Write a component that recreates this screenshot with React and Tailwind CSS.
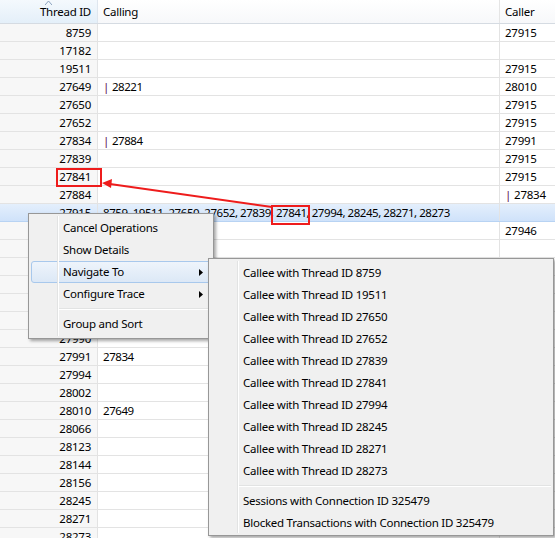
import React from 'react'

const rows = [
    { id: '8759', calling: '', caller: '27915' },
    { id: '17182', calling: '', caller: '' },
    { id: '19511', calling: '', caller: '27915' },
    { id: '27649', calling: '28221', bar: true, caller: '28010' },
    { id: '27650', calling: '', caller: '27915' },
    { id: '27652', calling: '', caller: '27915' },
    { id: '27834', calling: '27884', bar: true, caller: '27991' },
    { id: '27839', calling: '', caller: '27915' },
    { id: '27841', calling: '', caller: '27915' },
    { id: '27884', calling: '', caller: '27834', callerBar: true },
    { id: '27915', calling: '8759, 19511, 27650, 27652, 27839, 27841, 27994, 28245, 28271, 28273', caller: '', selected: true },
    { id: '27946', calling: '', caller: '27946' },
    { id: '27950', calling: '', caller: '' },
    { id: '27962', calling: '', caller: '' },
    { id: '27971', calling: '', caller: '' },
    { id: '27978', calling: '', caller: '' },
    { id: '27985', calling: '', caller: '' },
    { id: '27990', calling: '', caller: '' },
    { id: '27991', calling: '27834', caller: '' },
    { id: '27994', calling: '', caller: '' },
    { id: '28002', calling: '', caller: '' },
    { id: '28010', calling: '27649', caller: '' },
    { id: '28066', calling: '', caller: '' },
    { id: '28123', calling: '', caller: '' },
    { id: '28144', calling: '', caller: '' },
    { id: '28156', calling: '', caller: '' },
    { id: '28245', calling: '', caller: '' },
    { id: '28271', calling: '', caller: '' },
    { id: '28273', calling: '', caller: '' },
]

const callees = ['8759', '19511', '27650', '27652', '27839', '27841', '27994', '28245', '28271', '28273']

function Bar() {
    return <span className="text-[#5a1450] mr-[3px]">|</span>
}

function Tri() {
    return (
        <svg width="4" height="7" viewBox="0 0 4 7" className="mr-[7px]">
            <path d="M0 0 L4 3.5 L0 7 Z" fill="#000" />
        </svg>
    )
}

function MenuItem({ label, active, sub }) {
    return (
        <div className={`h-[22px] flex items-center mx-[2px] rounded-[3px] border ${active ? 'bg-gradient-to-b from-[#eef4fb] to-[#dce8f6] border-[#a8c8ec]' : 'border-transparent'}`}>
            <span className="pl-[31px] flex-1">{label}</span>
            {sub && <Tri />}
        </div>
    )
}

export default function App() {
    return (
        <div className="relative w-[555px] h-[538px] overflow-hidden bg-white text-[11.5px] tracking-[-0.25px] text-black leading-none" style={{ fontFamily: '"Noto Sans", "Open Sans", sans-serif' }}>
            {/* header */}
            <div className="flex h-[24px] border-b border-[#d5dbe2]">
                <div className="relative w-[98px] shrink-0 bg-gradient-to-b from-[#f4f9fd] to-[#e4eff9] border-r border-[#dfe6ee] flex items-center justify-end pr-[6px]">
                    <svg width="7" height="4" viewBox="0 0 7 4" className="absolute left-[45px] top-[1px]">
                        <path d="M0 4 L3.5 0 L7 4" fill="none" stroke="#8ba3bf" strokeWidth="1" />
                    </svg>
                    Thread ID
                </div>
                <div className="w-[402px] shrink-0 bg-gradient-to-b from-white to-[#f7f8fa] border-r border-[#e5e5e5] flex items-center pl-[5px]">Calling</div>
                <div className="flex-1 bg-gradient-to-b from-white to-[#f7f8fa] flex items-center pl-[5px]">Caller</div>
            </div>

            {/* rows */}
            {rows.map((r) => (
                <div key={r.id} className={`flex h-[18px] border-b ${r.selected ? 'bg-gradient-to-b from-[#e4effc] to-[#cfe2fa] border-[#b8d3f3]' : 'border-[#e3e3e3]'}`}>
                    <div className={`w-[98px] shrink-0 border-r border-[#e3e3e3] flex items-center justify-end pr-[6px] ${r.selected ? '' : 'bg-[#f7f7f7]'}`}>{r.id}</div>
                    <div className="w-[402px] shrink-0 border-r border-[#e3e3e3] flex items-center pl-[5px] whitespace-nowrap tracking-[-0.45px]">
                        {r.bar && <Bar />}{r.calling}
                    </div>
                    <div className="flex-1 flex items-center pl-[5px]">
                        {r.callerBar && <Bar />}{r.caller}
                    </div>
                </div>
            ))}

            {/* context menu */}
            <div className="absolute left-[28px] top-[213px] w-[186px] h-[126px] bg-[#f0f0f0] border border-[#979797] shadow-[2px_2px_3px_rgba(0,0,0,0.35)] py-[3px]">
                <div className="absolute left-[28px] top-[2px] bottom-[2px] w-px bg-[#e2e3e3]" />
                <div className="absolute left-[29px] top-[2px] bottom-[2px] w-px bg-white" />
                <MenuItem label="Cancel Operations" />
                <MenuItem label="Show Details" />
                <MenuItem label="Navigate To" active sub />
                <MenuItem label="Configure Trace" sub />
                <div className="relative h-[8px] ml-[30px] mr-[2px] flex flex-col justify-center">
                    <div className="h-px bg-[#e2e3e3]" />
                    <div className="h-px bg-white" />
                </div>
                <MenuItem label="Group and Sort" />
            </div>

            {/* submenu */}
            <div className="absolute left-[208px] top-[258px] w-[346px] h-[278px] bg-[#f0f0f0] border border-[#979797] shadow-[2px_2px_3px_rgba(0,0,0,0.35)] py-[3px]">
                <div className="absolute left-[28px] top-[2px] bottom-[2px] w-px bg-[#e2e3e3]" />
                <div className="absolute left-[29px] top-[2px] bottom-[2px] w-px bg-white" />
                {callees.map((c) => (
                    <MenuItem key={c} label={`Callee with Thread ID ${c}`} />
                ))}
                <div className="relative h-[8px] ml-[30px] mr-[2px] flex flex-col justify-center">
                    <div className="h-px bg-[#e2e3e3]" />
                    <div className="h-px bg-white" />
                </div>
                <MenuItem label="Sessions with Connection ID 325479" />
                <MenuItem label="Blocked Transactions with Connection ID 325479" />
            </div>

            {/* annotations */}
            <div className="absolute left-[56px] top-[168px] w-[46px] h-[19px] border-2 border-[#ee1c1c]" />
            <div className="absolute left-[271px] top-[205px] w-[39px] h-[20px] border-2 border-[#ee1c1c]" />
            <svg className="absolute left-0 top-0" width="555" height="538">
                <line x1="272" y1="207" x2="110" y2="184" stroke="#ee1c1c" strokeWidth="2" />
                <path d="M102 183 L112 179 L111 188 Z" fill="#ee1c1c" />
            </svg>
        </div>
    )
}
